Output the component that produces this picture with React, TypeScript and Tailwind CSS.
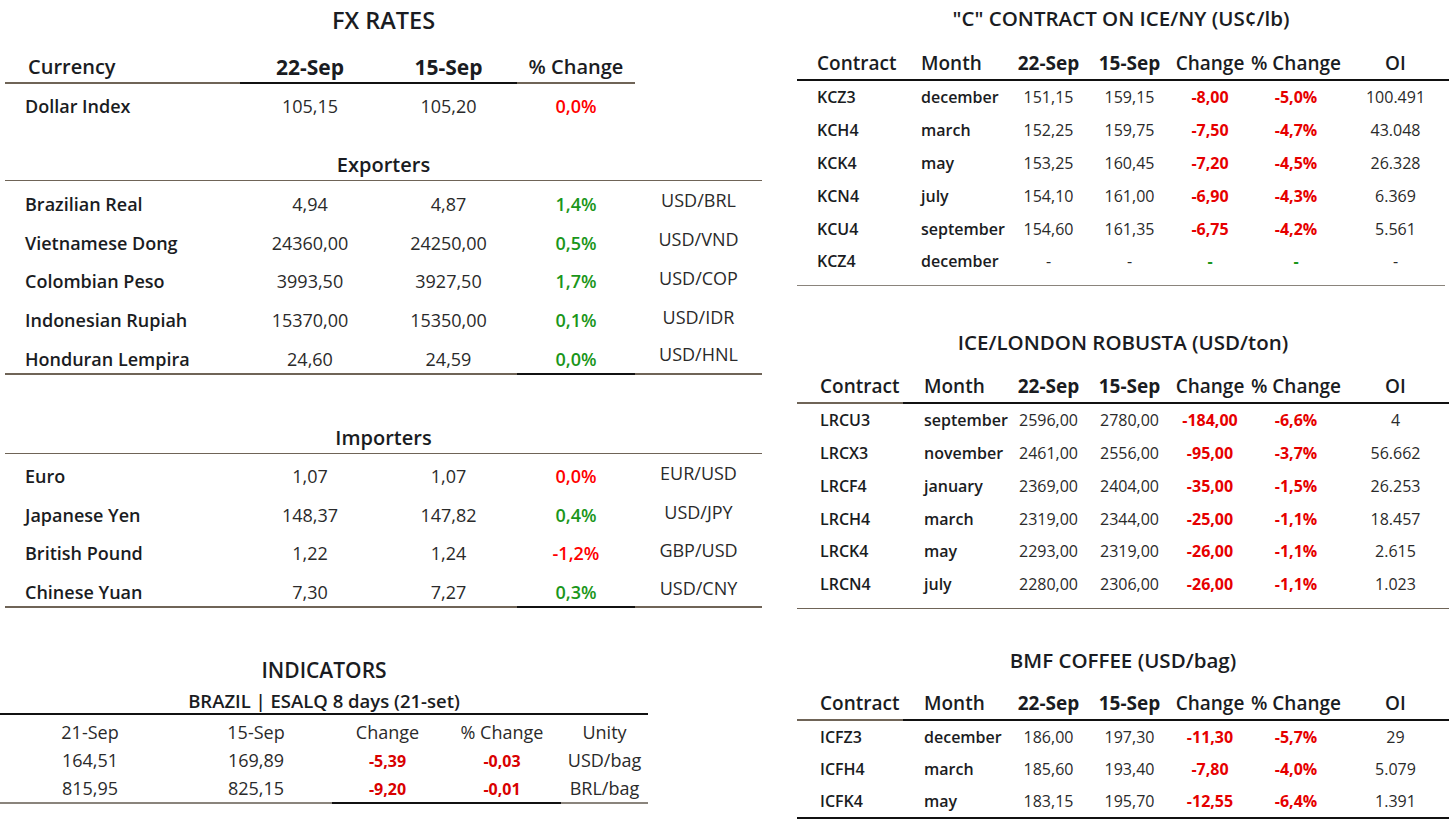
const RED = "text-[#ff0000]";
const GREEN = "text-[#1a961a]";

type FxRow = { name: string; a: string; b: string; pct: string; up: boolean; unit: string };

const exporters: FxRow[] = [
  { name: "Brazilian Real", a: "4,94", b: "4,87", pct: "1,4%", up: true, unit: "USD/BRL" },
  { name: "Vietnamese Dong", a: "24360,00", b: "24250,00", pct: "0,5%", up: true, unit: "USD/VND" },
  { name: "Colombian Peso", a: "3993,50", b: "3927,50", pct: "1,7%", up: true, unit: "USD/COP" },
  { name: "Indonesian Rupiah", a: "15370,00", b: "15350,00", pct: "0,1%", up: true, unit: "USD/IDR" },
  { name: "Honduran Lempira", a: "24,60", b: "24,59", pct: "0,0%", up: true, unit: "USD/HNL" },
];

const importers: FxRow[] = [
  { name: "Euro", a: "1,07", b: "1,07", pct: "0,0%", up: false, unit: "EUR/USD" },
  { name: "Japanese Yen", a: "148,37", b: "147,82", pct: "0,4%", up: true, unit: "USD/JPY" },
  { name: "British Pound", a: "1,22", b: "1,24", pct: "-1,2%", up: false, unit: "GBP/USD" },
  { name: "Chinese Yuan", a: "7,30", b: "7,27", pct: "0,3%", up: true, unit: "USD/CNY" },
];

type Contract = { code: string; month: string; a: string; b: string; chg: string; pct: string; oi: string; flat?: boolean };

const iceNy: Contract[] = [
  { code: "KCZ3", month: "december", a: "151,15", b: "159,15", chg: "-8,00", pct: "-5,0%", oi: "100.491" },
  { code: "KCH4", month: "march", a: "152,25", b: "159,75", chg: "-7,50", pct: "-4,7%", oi: "43.048" },
  { code: "KCK4", month: "may", a: "153,25", b: "160,45", chg: "-7,20", pct: "-4,5%", oi: "26.328" },
  { code: "KCN4", month: "july", a: "154,10", b: "161,00", chg: "-6,90", pct: "-4,3%", oi: "6.369" },
  { code: "KCU4", month: "september", a: "154,60", b: "161,35", chg: "-6,75", pct: "-4,2%", oi: "5.561" },
  { code: "KCZ4", month: "december", a: "-", b: "-", chg: "-", pct: "-", oi: "-", flat: true },
];

const london: Contract[] = [
  { code: "LRCU3", month: "september", a: "2596,00", b: "2780,00", chg: "-184,00", pct: "-6,6%", oi: "4" },
  { code: "LRCX3", month: "november", a: "2461,00", b: "2556,00", chg: "-95,00", pct: "-3,7%", oi: "56.662" },
  { code: "LRCF4", month: "january", a: "2369,00", b: "2404,00", chg: "-35,00", pct: "-1,5%", oi: "26.253" },
  { code: "LRCH4", month: "march", a: "2319,00", b: "2344,00", chg: "-25,00", pct: "-1,1%", oi: "18.457" },
  { code: "LRCK4", month: "may", a: "2293,00", b: "2319,00", chg: "-26,00", pct: "-1,1%", oi: "2.615" },
  { code: "LRCN4", month: "july", a: "2280,00", b: "2306,00", chg: "-26,00", pct: "-1,1%", oi: "1.023" },
];

const bmf: Contract[] = [
  { code: "ICFZ3", month: "december", a: "186,00", b: "197,30", chg: "-11,30", pct: "-5,7%", oi: "29" },
  { code: "ICFH4", month: "march", a: "185,60", b: "193,40", chg: "-7,80", pct: "-4,0%", oi: "5.079" },
  { code: "ICFK4", month: "may", a: "183,15", b: "195,70", chg: "-12,55", pct: "-6,4%", oi: "1.391" },
];

const fxCols = "grid grid-cols-[235px_140px_137px_118px_127px]";
const ctCols = "grid grid-cols-[106px_105px_81px_81px_80px_92px_107px]";
const indCols = "grid grid-cols-[180px_152px_111px_118px_87px]";

function FxLine({ r, last, rowH }: { r: FxRow; last: boolean; rowH: string }) {
  const b = last ? "border-b-2 " : "";
  const pb = last ? "pb-[2px]" : "pb-[4px]";
  return (
    <div className={fxCols}>
      <div className={`${rowH} ${b}border-[#6f6457] flex items-end ${pb} pl-[20px] text-[18px] font-semibold text-[#1a1c22]`}>{r.name}</div>
      <div className={`${rowH} ${b}border-[#6f6457] flex items-end justify-center ${pb} text-[18px] text-[#2a2a2a]`}>{r.a}</div>
      <div className={`${rowH} ${b}border-[#6f6457] flex items-end justify-center ${pb} text-[18px] text-[#2a2a2a]`}>{r.b}</div>
      <div className={`${rowH} ${b}border-[#111] flex items-end justify-center ${pb} text-[18px] font-semibold ${r.up ? GREEN : RED}`}>{r.pct}</div>
      <div className={`${rowH} ${b}border-[#6f6457] flex items-center justify-center text-[18px] text-[#2a2a2a]`}>{r.unit}</div>
    </div>
  );
}

function FxPanel() {
  return (
    <div className="ml-[5px] w-[757px]">
      <div className="h-[40px] flex items-center justify-center text-[23.5px] font-semibold text-[#1a1c22]">FX RATES</div>
      <div className={`${fxCols} text-[20px] text-[#1a1c22]`}>
        <div className="h-[44px] border-b-2 border-[#6f6457] flex items-end pb-[3px] pl-[23px] font-semibold">Currency</div>
        <div className="h-[44px] border-b-2 border-[#111] flex items-end justify-center pb-[3px] text-[21px] font-bold">22-Sep</div>
        <div className="h-[44px] border-b-2 border-[#111] flex items-end justify-center pb-[3px] text-[21px] font-bold">15-Sep</div>
        <div className="h-[44px] border-b-2 border-[#6f6457] flex items-end justify-center pb-[3px] font-semibold">% Change</div>
        <div />
      </div>
      <div className={fxCols}>
        <div className="h-[40px] flex items-end pb-[6px] pl-[20px] text-[18px] font-semibold text-[#1a1c22]">Dollar Index</div>
        <div className="h-[40px] flex items-end justify-center pb-[6px] text-[18px] text-[#2a2a2a]">105,15</div>
        <div className="h-[40px] flex items-end justify-center pb-[6px] text-[18px] text-[#2a2a2a]">105,20</div>
        <div className={`h-[40px] flex items-end justify-center pb-[6px] text-[18px] font-semibold ${RED}`}>0,0%</div>
        <div />
      </div>
      <div className="h-[57px] border-b-[1.5px] border-[#6f6457] flex items-end justify-center pb-[3px] text-[20px] font-semibold text-[#1a1c22]">Exporters</div>
      {exporters.map((r, i) => (
        <FxLine key={r.name} r={r} last={i === exporters.length - 1} rowH="h-[38.75px]" />
      ))}
      <div className="h-[79px] border-b-[1.5px] border-[#6f6457] flex items-end justify-center pb-[3px] text-[20px] font-semibold text-[#1a1c22]">Importers</div>
      {importers.map((r, i) => (
        <FxLine key={r.name} r={r} last={i === importers.length - 1} rowH="h-[38.5px]" />
      ))}
    </div>
  );
}

function Indicators() {
  const rows = [
    { a: "164,51", b: "169,89", c: "-5,39", p: "-0,03", u: "USD/bag" },
    { a: "815,95", b: "825,15", c: "-9,20", p: "-0,01", u: "BRL/bag" },
  ];
  return (
    <div className="mt-[47px] w-[648px] text-[#1a1c22]">
      <div className="h-[30px] flex items-center justify-center text-[21px] font-semibold">INDICATORS</div>
      <div className="h-[30px] border-b-2 border-[#111] flex items-end justify-center text-[18.5px] font-semibold">BRAZIL | ESALQ 8 days (21-set)</div>
      <div className={`${indCols} h-[31px] pt-[4px] items-center text-center text-[18px] text-[#2a2a2a]`}>
        <div>21-Sep</div>
        <div>15-Sep</div>
        <div>Change</div>
        <div>% Change</div>
        <div>Unity</div>
      </div>
      {rows.map((r, i) => {
        const b = i === rows.length - 1 ? "border-b-2 " : "";
        return (
          <div key={r.u} className={`${indCols} text-center text-[18px] text-[#2a2a2a]`}>
            <div className={`h-[29px] ${b}border-[#8a847c] flex items-center justify-center`}>{r.a}</div>
            <div className={`h-[29px] ${b}border-[#8a847c] flex items-center justify-center`}>{r.b}</div>
            <div className={`h-[29px] ${b}border-[#111] flex items-center justify-center pt-[2px] text-[16px] font-bold text-[#d90000]`}>{r.c}</div>
            <div className={`h-[29px] ${b}border-[#111] flex items-center justify-center pt-[2px] text-[16px] font-bold text-[#d90000]`}>{r.p}</div>
            <div className={`h-[29px] ${b}border-[#8a847c] flex items-center justify-center`}>{r.u}</div>
          </div>
        );
      })}
    </div>
  );
}

function ContractTable({
  title,
  rows,
  spacer,
  headH,
  rowH,
  brownLead,
  shifted,
  bottom,
}: {
  title: string;
  rows: Contract[];
  spacer: string;
  headH: string;
  rowH: string;
  brownLead: boolean;
  shifted: boolean;
  bottom: string;
}) {
  const pc = shifted ? "pl-[23px]" : "pl-[20px]";
  const pm = shifted ? "pl-[21px]" : "pl-[18px]";
  return (
    <div className={`${spacer} ${bottom}`}>
      <div className="h-[36px] flex items-center justify-center text-[20.5px] font-semibold text-[#1a1c22]">{title}</div>
      <div className={`${ctCols} ${headH} text-[19px] text-[#1a1c22]`}>
        <div className={`border-b-2 ${brownLead ? "border-[#6f6457]" : "border-[#111]"} flex items-end pb-[4px] ${pc} font-semibold`}>Contract</div>
        <div className={`border-b-2 border-[#111] flex items-end pb-[4px] ${pm} font-semibold`}>Month</div>
        <div className="border-b-2 border-[#111] flex items-end justify-center pb-[4px] font-bold">22-Sep</div>
        <div className="border-b-2 border-[#111] flex items-end justify-center pb-[4px] font-bold">15-Sep</div>
        <div className="border-b-2 border-[#111] flex items-end justify-center pb-[4px] font-semibold">Change</div>
        <div className="border-b-2 border-[#111] flex items-end justify-center pb-[4px] font-semibold">% Change</div>
        <div className="border-b-2 border-[#111] flex items-end justify-center pb-[4px] font-semibold">OI</div>
      </div>
      {rows.map((r) => (
        <div key={r.code} className={`${ctCols} ${rowH} items-center text-[16px] text-[#2a2a2a]`}>
          <div className={`${pc} font-semibold text-[#1a1c22]`}>{r.code}</div>
          <div className={`${pm} font-semibold text-[#1a1c22]`}>{r.month}</div>
          <div className="text-center">{r.a}</div>
          <div className="text-center">{r.b}</div>
          <div className={`text-center font-bold ${r.flat ? "text-[#1a961a]" : "text-[#e60000]"}`}>{r.chg}</div>
          <div className={`text-center font-bold ${r.flat ? "text-[#1a961a]" : "text-[#e60000]"}`}>{r.pct}</div>
          <div className="text-center">{r.oi}</div>
        </div>
      ))}
    </div>
  );
}

export default function App() {
  return (
    <div className="w-[1449px] h-[819px] overflow-hidden bg-white flex font-['Open_Sans','Liberation_Sans',sans-serif] leading-[24px]">
      <div className="w-[797px] flex flex-col">
        <FxPanel />
        <Indicators />
      </div>
      <div className="w-[652px] flex flex-col">
        <ContractTable
          title={'"C" CONTRACT ON ICE/NY (US¢/lb)'}
          rows={iceNy}
          spacer=""
          headH="h-[45px]"
          rowH="h-[32.8px]"
          brownLead={false}
          shifted={false}
          bottom="pb-[7px] border-b border-[#8a847c] mr-[4px]"
        />
        <ContractTable
          title="ICE/LONDON ROBUSTA (USD/ton)"
          rows={london}
          spacer="pt-[38px]"
          headH="h-[44px]"
          rowH="h-[32.8px]"
          brownLead={true}
          shifted={true}
          bottom="pb-[7px] border-b border-[#6f6457]"
        />
        <ContractTable
          title="BMF COFFEE (USD/bag)"
          rows={bmf}
          spacer="pt-[33px]"
          headH="h-[43px]"
          rowH="h-[32.2px]"
          brownLead={true}
          shifted={true}
          bottom="border-b-2 border-[#111]"
        />
      </div>
    </div>
  );
}
